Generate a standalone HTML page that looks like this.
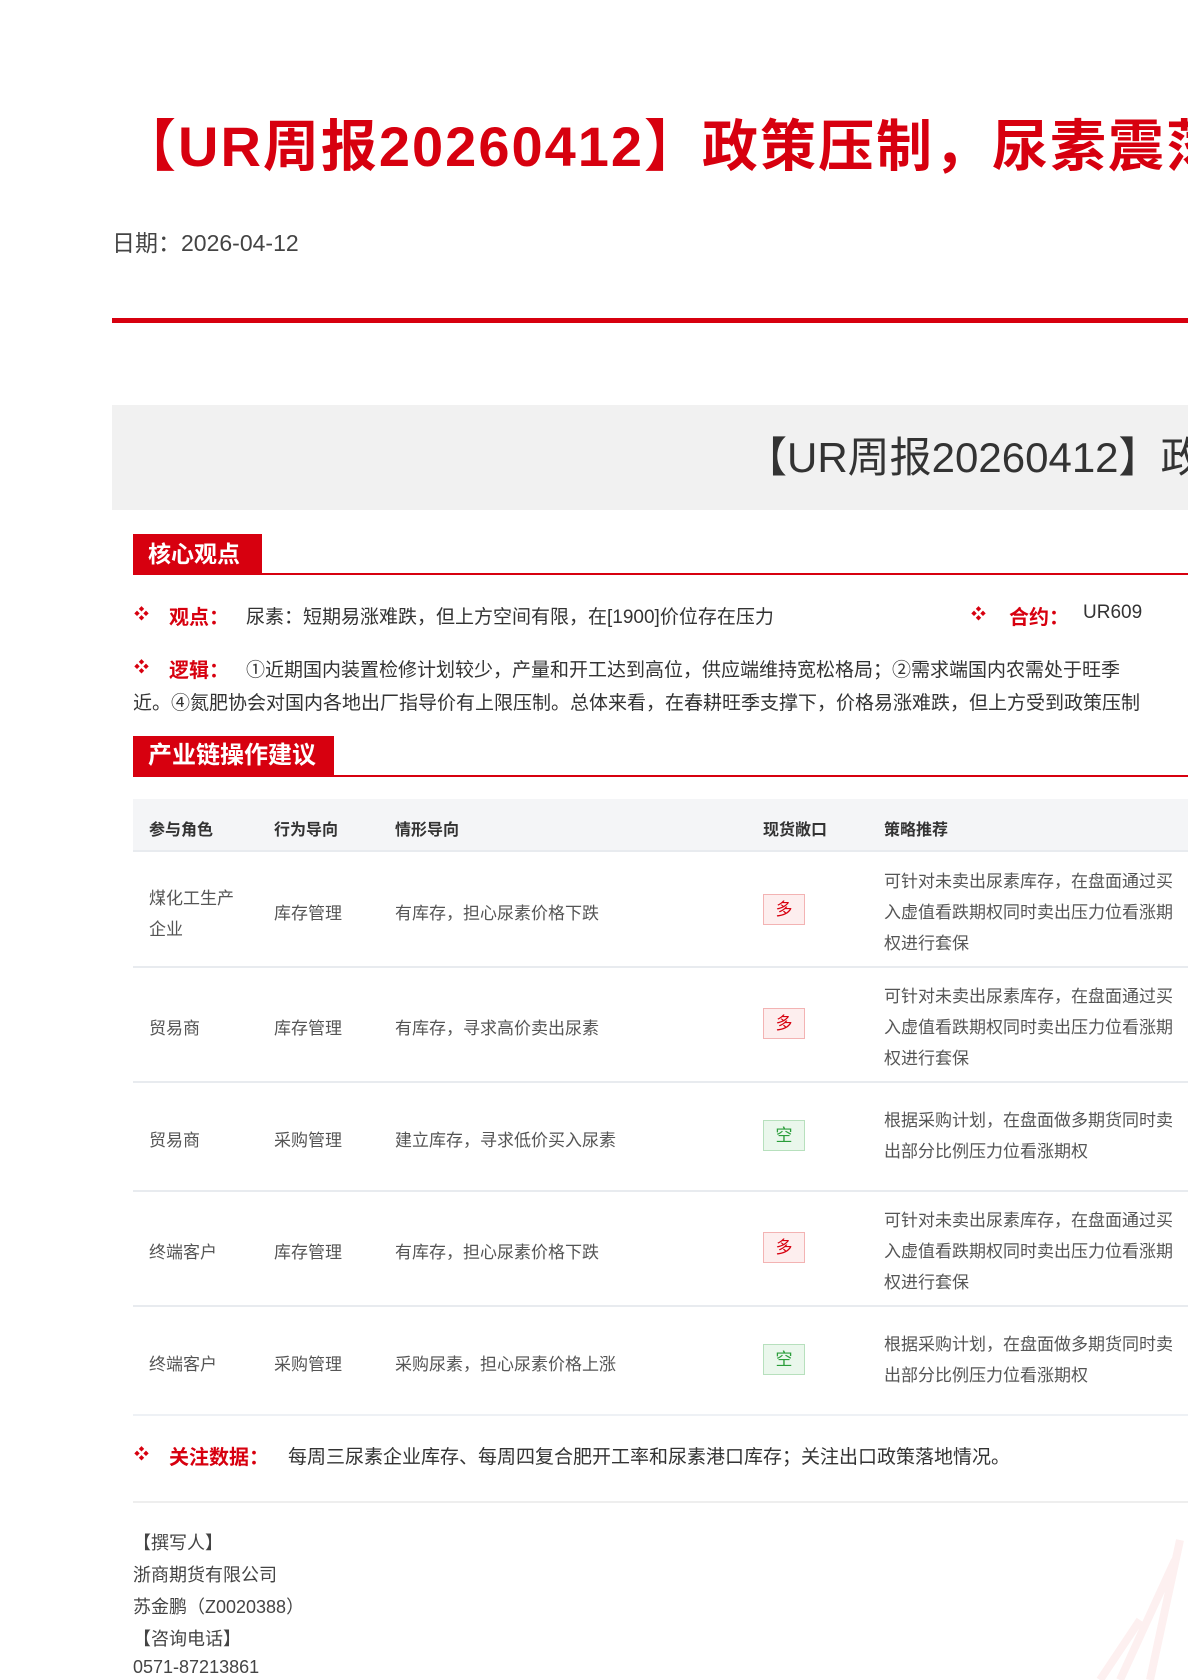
<!DOCTYPE html>
<html><head><meta charset="utf-8"><style>
*{margin:0;padding:0;box-sizing:border-box}
html,body{width:1188px;height:1680px;overflow:hidden;background:#fff}
body{position:relative;font-family:"Liberation Sans","Noto Sans CJK SC",sans-serif;color:#333}
.a{position:absolute;white-space:nowrap}
.clip{position:absolute;left:0;top:0;width:1188px;height:1680px;overflow:hidden}
.title{left:120px;top:112px;font-size:56px;font-weight:bold;color:#d7000f;line-height:70px;letter-spacing:2px}
.date{left:112px;top:224px;font-size:23px;color:#444}
.redline{left:112px;top:318px;width:1076px;height:5px;background:#d7000f}
.gray{left:112px;top:405px;width:1076px;height:105px;background:#f1f1f1}
.sub{left:745px;top:430px;font-size:42px;color:#333;line-height:56px}
.tab{background:#d7000f;color:#fff;font-weight:bold;line-height:40px}
.tline{left:133px;width:1055px;height:2px;background:#d7000f}
.bul{color:#d7000f;font-size:15px}
.lab{color:#d7000f;font-weight:bold;font-size:20px}
.txt{font-size:19px;color:#333}
.th{top:799px;left:133px;width:1055px;height:53px;background:#f4f5f7;border-bottom:2px solid #e8ebef}
.hc{font-size:16px;font-weight:bold;color:#333;top:816px}
.rl{left:133px;width:1055px;height:2px;background:#e8ebef}
.c{font-size:17px;color:#555}
.badge{width:42px;height:31px;font-size:17px;text-align:center;line-height:29px;border:1px solid}
.dup{color:#d7000f;background:#fdeeee;border-color:#f3b3b3}
.kong{color:#2a9d3a;background:#eaf7ec;border-color:#b7e0bd}
.s{font-size:17px;color:#555;line-height:31px}
.f{font-size:18px;color:#444;left:133px}
</style></head><body><div class="clip">
<div class="a title">【UR周报20260412】政策压制，尿素震荡偏弱</div>
<div class="a date">日期：2026-04-12</div>
<div class="a redline"></div>
<div class="a gray"></div>
<div class="a sub">【UR周报20260412】政策压制，尿素震荡</div>

<div class="a tab" style="left:133px;top:534px;width:129px;font-size:23px;padding-left:15px">核心观点</div>
<div class="a tline" style="top:573px"></div>
<div class="a bul" style="left:134px;top:603px">❖</div>
<div class="a lab" style="left:169px;top:601px">观点：</div>
<div class="a txt" style="left:246px;top:602px">尿素：短期易涨难跌，但上方空间有限，在[1900]价位存在压力</div>
<div class="a bul" style="left:971px;top:603px">❖</div>
<div class="a lab" style="left:1009px;top:601px">合约：</div>
<div class="a txt" style="left:1083px;top:602px">UR609</div>
<div class="a bul" style="left:134px;top:656px">❖</div>
<div class="a lab" style="left:169px;top:654px">逻辑：</div>
<div class="a txt" style="left:246px;top:655px">①近期国内装置检修计划较少，产量和开工达到高位，供应端维持宽松格局；②需求端国内农需处于旺季</div>
<div class="a txt" style="left:133px;top:688px">近。④氮肥协会对国内各地出厂指导价有上限压制。总体来看，在春耕旺季支撑下，价格易涨难跌，但上方受到政策压制</div>

<div class="a tab" style="left:133px;top:736px;width:201px;font-size:24px;padding-left:15px">产业链操作建议</div>
<div class="a tline" style="top:775px"></div>

<div class="a th"></div>
<div class="a hc" style="left:149px">参与角色</div>
<div class="a hc" style="left:274px">行为导向</div>
<div class="a hc" style="left:395px">情形导向</div>
<div class="a hc" style="left:763px">现货敞口</div>
<div class="a hc" style="left:884px">策略推荐</div>

<div class="a c" style="left:149px;top:883px;line-height:31px">煤化工生产<br>企业</div>
<div class="a c" style="left:274px;top:899px">库存管理</div>
<div class="a c" style="left:395px;top:899px">有库存，担心尿素价格下跌</div>
<div class="a badge dup" style="left:763px;top:894px">多</div>
<div class="a s" style="left:884px;top:866px">可针对未卖出尿素库存，在盘面通过买<br>入虚值看跌期权同时卖出压力位看涨期<br>权进行套保</div>
<div class="a rl" style="top:966px"></div>
<div class="a c" style="left:149px;top:1014px">贸易商</div>
<div class="a c" style="left:274px;top:1014px">库存管理</div>
<div class="a c" style="left:395px;top:1014px">有库存，寻求高价卖出尿素</div>
<div class="a badge dup" style="left:763px;top:1008px">多</div>
<div class="a s" style="left:884px;top:981px">可针对未卖出尿素库存，在盘面通过买<br>入虚值看跌期权同时卖出压力位看涨期<br>权进行套保</div>
<div class="a rl" style="top:1081px"></div>
<div class="a c" style="left:149px;top:1126px">贸易商</div>
<div class="a c" style="left:274px;top:1126px">采购管理</div>
<div class="a c" style="left:395px;top:1126px">建立库存，寻求低价买入尿素</div>
<div class="a badge kong" style="left:763px;top:1120px">空</div>
<div class="a s" style="left:884px;top:1105px">根据采购计划，在盘面做多期货同时卖<br>出部分比例压力位看涨期权</div>
<div class="a rl" style="top:1190px"></div>
<div class="a c" style="left:149px;top:1238px">终端客户</div>
<div class="a c" style="left:274px;top:1238px">库存管理</div>
<div class="a c" style="left:395px;top:1238px">有库存，担心尿素价格下跌</div>
<div class="a badge dup" style="left:763px;top:1232px">多</div>
<div class="a s" style="left:884px;top:1205px">可针对未卖出尿素库存，在盘面通过买<br>入虚值看跌期权同时卖出压力位看涨期<br>权进行套保</div>
<div class="a rl" style="top:1305px"></div>
<div class="a c" style="left:149px;top:1350px">终端客户</div>
<div class="a c" style="left:274px;top:1350px">采购管理</div>
<div class="a c" style="left:395px;top:1350px">采购尿素，担心尿素价格上涨</div>
<div class="a badge kong" style="left:763px;top:1344px">空</div>
<div class="a s" style="left:884px;top:1329px">根据采购计划，在盘面做多期货同时卖<br>出部分比例压力位看涨期权</div>
<div class="a rl" style="top:1414px;background:#eef1f5"></div>

<div class="a bul" style="left:134px;top:1443px">❖</div>
<div class="a lab" style="left:169px;top:1441px">关注数据：</div>
<div class="a txt" style="left:288px;top:1442px">每周三尿素企业库存、每周四复合肥开工率和尿素港口库存；关注出口政策落地情况。</div>
<div class="a rl" style="top:1501px;background:#eeeeee"></div>

<div class="a f" style="top:1529px">【撰写人】</div>
<div class="a f" style="top:1561px">浙商期货有限公司</div>
<div class="a f" style="top:1593px">苏金鹏（Z0020388）</div>
<div class="a f" style="top:1625px">【咨询电话】</div>
<div class="a f" style="top:1657px">0571-87213861</div>

<svg class="a" style="left:1000px;top:1500px" width="188" height="180"><path d="M180 40 L150 180 M140 120 L100 180 M175 60 L120 180" stroke="#fdf0f0" stroke-width="8" fill="none"/></svg>
</div></body></html>
